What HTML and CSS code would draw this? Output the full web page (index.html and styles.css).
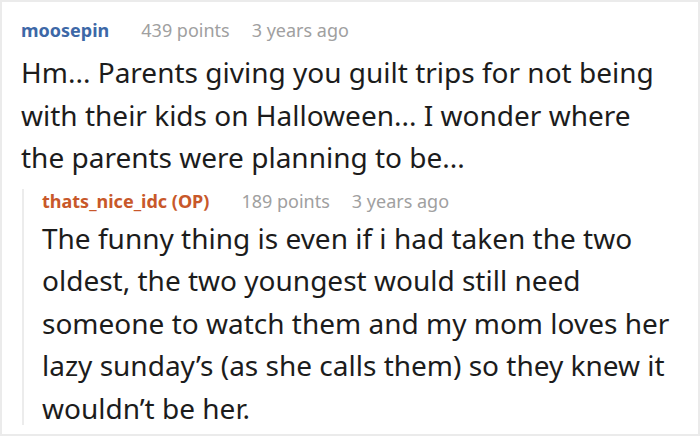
FILE: index.html
```html
<!DOCTYPE html>
<html>
<head>
<meta charset="utf-8">
<link rel="stylesheet" href="styles.css">
</head>
<body>
<div class="frame">
  <div class="comment">
    <div class="meta">
      <span class="author">moosepin</span>
      <span class="points">439 points</span>
      <span class="time">3 years ago</span>
    </div>
    <p class="body">Hm... Parents giving you guilt trips for not being with their kids on Halloween... I wonder where the parents were planning to be...</p>
    <div class="reply">
      <div class="meta">
        <span class="author op">thats_nice_idc (OP)</span>
        <span class="points">189 points</span>
        <span class="time">3 years ago</span>
      </div>
      <p class="body reply-body">The funny thing is even if i had taken the two oldest, the two youngest would still need someone to watch them and my mom loves her lazy sunday’s (as she calls them) so they knew it wouldn’t be her.</p>
    </div>
  </div>
</div>
</body>
</html>
```

FILE: styles.css
```css
html, body {
  margin: 0;
  padding: 0;
  background: #ffffff;
}
.frame {
  box-sizing: border-box;
  width: 700px;
  height: 436px;
  border: 2px solid #ebebeb;
  overflow: hidden;
  font-family: "Noto Sans", "Open Sans", sans-serif;
  color: #1c1c1c;
}
.comment {
  padding: 16px 18px 0 19px;
}
.meta {
  display: flex;
  align-items: baseline;
  font-size: 18px;
  line-height: 24px;
  color: #a0a0a0;
  white-space: nowrap;
}
.author {
  font-weight: bold;
  color: #3d68a7;
  margin-right: 32px;
}
.author.op {
  color: #c8582a;
}
.points {
  margin-right: 22px;
}
.body {
  margin: 9px 0 0 0;
  font-size: 28px;
  line-height: 42.5px;
}
.reply {
  padding: 10px 0 8px 21px;
  background: linear-gradient(#ececec, #ececec) no-repeat 1px 10px / 2px calc(100% - 22px);
}
.reply-body {
  margin-top: 4px;
}
```
